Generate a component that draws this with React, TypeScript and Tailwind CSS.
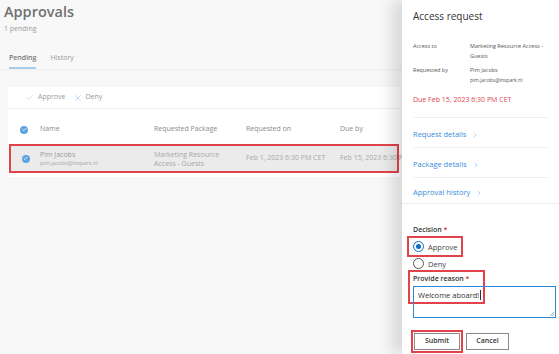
import { Check, X, ChevronRight } from "lucide-react"

function CheckCircle() {
  return (
    <span className="flex h-[8px] w-[8px] items-center justify-center rounded-full bg-[#5fa2dd]">
      <Check className="h-[5px] w-[5px] text-white" strokeWidth={4} />
    </span>
  )
}

function Radio({ checked, label }: { checked?: boolean; label: string }) {
  return (
    <div className="flex items-center gap-[4px]">
      <span
        className={
          "flex h-[11px] w-[11px] items-center justify-center rounded-full border " +
          (checked ? "border-[#0f6cbd]" : "border-[#555]")
        }
      >
        {checked && <span className="h-[5px] w-[5px] rounded-full bg-[#0f6cbd]" />}
      </span>
      <span className="text-[7.5px] leading-[10px] text-[#444]">{label}</span>
    </div>
  )
}

export default function App() {
  const links = ["Request details", "Package details", "Approval history"]

  return (
    <div className="flex h-[354px] w-[559px] overflow-hidden font-['Open_Sans',sans-serif]">
      {/* Liste (gedimd achter het paneel) */}
      <div className="w-[402px] shrink-0 overflow-hidden bg-[#f8f8f8]">
        <div className="px-[4px] pt-[2px]">
          <h1 className="text-[14.5px] leading-[20px] font-semibold text-[#707070]">Approvals</h1>
          <p className="mt-[2px] text-[7px] leading-[10px] text-[#9a9a9a]">1 pending</p>
        </div>

        <div className="mt-[19px] flex gap-[14px] border-b border-[#efefef] px-[9px]">
          <div className="border-b-2 border-[#a9cdef] pb-[4px] text-[7px] leading-[10px] font-semibold text-[#777]">
            Pending
          </div>
          <div className="pb-[4px] text-[7px] leading-[10px] text-[#999]">History</div>
        </div>

        <div className="ml-[8px] mt-[17px] w-[392px] bg-white">
          <div className="flex h-[22px] items-center gap-[7px] border-b border-[#f0f0f0] px-[17px] text-[7px] text-[#9a9a9a]">
            <span className="flex items-center gap-[4px]">
              <Check className="h-[9px] w-[9px] text-[#9fc4e8]" strokeWidth={1.5} />
              Approve
            </span>
            <span className="flex items-center gap-[3px]">
              <X className="h-[10px] w-[10px] text-[#9fc4e8]" strokeWidth={1.5} />
              Deny
            </span>
          </div>

          <div className="grid h-[37px] grid-cols-[32px_114px_92px_94px_1fr] items-center pt-[4px] text-[7px] text-[#8a8a8a]">
            <div className="flex justify-center">
              <CheckCircle />
            </div>
            <div>Name</div>
            <div>Requested Package</div>
            <div>Requested on</div>
            <div>Due by</div>
          </div>

          <div className="mx-[3px] grid h-[25px] grid-cols-[29px_114px_92px_94px_1fr] items-center bg-[#ebebeb] text-[7px] text-[#a8a8a8] outline-2 outline-[#e2434b]">
            <div className="flex justify-center">
              <CheckCircle />
            </div>
            <div className="leading-[9px]">
              <div className="text-[7px] text-[#9a9a9a]">Pim Jacobs</div>
              <div className="text-[5.5px]">pim.jacobs@inspark.nl</div>
            </div>
            <div className="leading-[9px]">
              Marketing Resource
              <br />
              Access - Guests
            </div>
            <div className="whitespace-nowrap">Feb 1, 2023 6:30 PM CET</div>
            <div className="whitespace-nowrap">Feb 15, 2023 6:30 PM CET</div>
          </div>
          <div className="h-[6px]" />
        </div>
      </div>

      {/* Paneel */}
      <div className="relative z-10 w-[157px] shrink-0 bg-white text-[#333] shadow-[-10px_0_14px_rgba(0,0,0,0.13)]">
        <div className="px-[11px]">
          <h2 className="pt-[9px] text-[10px] leading-[14px] text-[#333]">Access request</h2>

          <div className="mt-[18px] grid grid-cols-[57px_1fr] gap-y-[4px] text-[5.5px] leading-[10px] text-[#555]">
            <div>Access to</div>
            <div className="whitespace-nowrap">
              Marketing Resource Access -
              <br />
              Guests
            </div>
            <div>Requested by</div>
            <div>
              Pim Jacobs
              <br />
              <span className="text-[5px]">pim.jacobs@inspark.nl</span>
            </div>
          </div>

          <p className="mt-[9px] text-[7px] leading-[12px] text-[#e0474c]">Due Feb 15, 2023 6:30 PM CET</p>
        </div>

        <div className="mx-[11px] mt-[11px] border-t border-[#f0f0f0]">
          {links.map((link, index) => (
            <div
              key={index}
              className={
                "flex items-center gap-[5px] text-[7.5px] text-[#3a8ddb] " +
                (index < links.length - 1 ? "h-[30px] border-b border-[#f0f0f0] pt-[4px]" : "h-[25px] pt-[4px]")
              }
            >
              {link}
              <ChevronRight className="h-[8px] w-[8px] text-[#6aa7e3]" strokeWidth={1.5} />
            </div>
          ))}
        </div>

        <div className="border-t border-[#ebebeb] px-[11px] pt-[21px]">
          <div className="text-[7px] leading-[10px] font-semibold text-[#333]">
            Decision <span className="text-[#d13438]">*</span>
          </div>

          <div className="-ml-[4px] mt-[3px] w-[52px] py-[3px] pl-[4px] outline-2 outline-[#e2434b]">
            <Radio checked label="Approve" />
          </div>
          <div className="mt-[3px]">
            <Radio label="Deny" />
          </div>

          <div className="relative mt-[5px]">
            <div className="pointer-events-none absolute -left-[3px] -top-[2px] h-[30px] w-[73px] outline-2 outline-[#e2434b]" />
            <div className="text-[7px] leading-[10px] font-semibold text-[#333]">
              Provide reason <span className="text-[#d13438]">*</span>
            </div>
            <div className="relative mt-[2px] h-[32px] w-[143px] border border-[#2b88d8] px-[4px] pt-[3px] text-[7.5px] leading-[10px] text-[#333]">
              Welcome aboard!<span className="ml-[1px] border-l border-[#333]" />
              <svg className="absolute bottom-[1px] right-[1px] h-[5px] w-[5px]" viewBox="0 0 5 5">
                <path d="M1 5 L5 1 M3 5 L5 3" stroke="#888" strokeWidth="0.7" />
              </svg>
            </div>
          </div>

          <div className="mt-[15px] flex gap-[6px] pl-[1px]">
            <button className="h-[17px] w-[46px] border border-[#8a8a8a] text-[7px] font-semibold text-[#333] outline-2 outline-offset-1 outline-[#e2434b]">
              Submit
            </button>
            <button className="h-[17px] w-[43px] border border-[#8a8a8a] text-[7px] font-semibold text-[#333]">
              Cancel
            </button>
          </div>
        </div>
      </div>
    </div>
  )
}
